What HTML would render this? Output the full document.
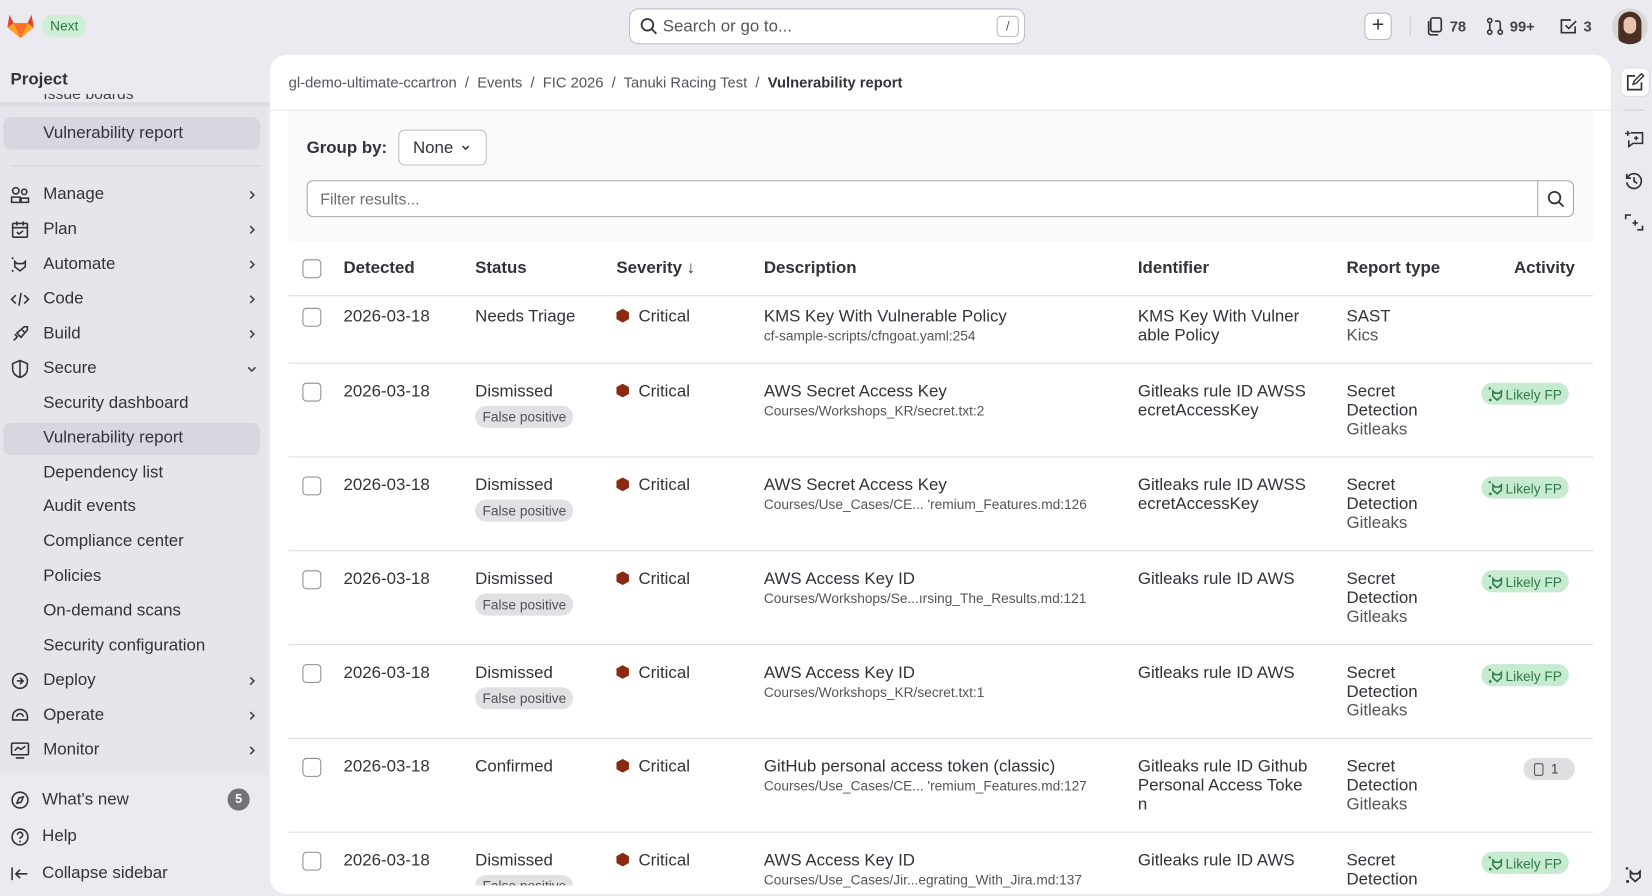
<!DOCTYPE html>
<html><head><meta charset="utf-8">
<style>
*{box-sizing:border-box;margin:0;padding:0}
html,body{width:1652px;height:896px;overflow:hidden;background:#ebeaf0}
#w{position:absolute;left:0;top:0;width:1568px;height:850px;transform:scale(1.05357,1.0541);transform-origin:0 0;font-family:"Liberation Sans",sans-serif;color:#333238;background:#ebeaf0}
.a{position:absolute;white-space:nowrap}
.nav{position:absolute;left:10px;font-size:16px;color:#333238;white-space:nowrap;width:240px;height:20px}
.nav .ic{position:absolute;left:0;top:0;width:18px;height:18px}
.nav .t{position:absolute;left:31px;top:0;white-space:nowrap}
.chev{position:absolute;left:224px;width:10px;height:10px}
.sub{position:absolute;left:41px;font-size:16px;color:#333238;white-space:nowrap}
.cb{position:absolute;width:18px;height:18px;border:1.5px solid #8d8c93;border-radius:4px;background:#fff}
.row{font-size:16px}
.sm{font-size:13px;color:#555}
.hex{display:inline-block;width:12px;height:13px;background:#8a2a11;clip-path:polygon(50% 0,100% 25%,100% 75%,50% 100%,0 75%,0 25%);vertical-align:-1px;margin-right:9px}
.fp{position:absolute;background:#e1e1e4;border-radius:12px;font-size:13px;color:#535158;padding:3px 7px}
.lfp{position:absolute;background:#c6ebd0;border-radius:12px;font-size:13px;color:#2f7a47;padding:3px 7px 3px 6px;left:1406px;height:21px}
.lfp svg{vertical-align:-3px;margin-right:1px}
.line{position:absolute;left:274px;width:1238px;height:1px;background:#dcdcde}
</style></head><body><div id="w">
<svg width="0" height="0" style="position:absolute"><defs>
<symbol id="tan" viewBox="0 0 16 16"><path d="M5 5l2 2h4l2-2v5l-4 3.5L5 10z" fill="none" stroke="currentColor" stroke-width="1.5"/><circle cx="2" cy="2.5" r="1.1" fill="currentColor"/><circle cx="2.5" cy="13.5" r="1.3" fill="currentColor"/></symbol>
<symbol id="chv" viewBox="0 0 10 10"><path d="M3.5 1.5L7 5 3.5 8.5" fill="none" stroke="#444" stroke-width="1.5"/></symbol>
</defs></svg>
<!-- top bar -->
<svg class="a" style="left:6px;top:12px" width="27" height="25" viewBox="0 0 27 25"><path d="M13.5 24 L1 14 L3 2 L7 10 H20 L24 2 L26 14Z" fill="#e24329"/><path d="M13.5 24 L7 10 H20Z" fill="#fc6d26"/><path d="M1 14 L7 10 L13.5 24Z" fill="#fca326"/><path d="M26 14 L20 10 L13.5 24Z" fill="#fca326"/></svg>
<div class="a" style="left:40px;top:14px;width:42px;height:21px;border-radius:11px;background:#cfeed6;color:#2a7a45;font-size:13px;line-height:21px;text-align:center">Next</div>
<div class="a" style="left:597px;top:8px;width:376px;height:34px;border:1px solid #bfbec5;border-radius:9px;background:#fff"></div>
<svg class="a" style="left:607px;top:16px" width="18" height="18" viewBox="0 0 18 18"><circle cx="7.5" cy="7.5" r="5.5" fill="none" stroke="#333" stroke-width="1.7"/><path d="M11.5 11.5L16 16" stroke="#333" stroke-width="1.7"/></svg>
<div class="a" style="left:629px;top:17px;font-size:16px;color:#55545b">Search or go to...</div>
<div class="a" style="left:946px;top:15px;width:21px;height:20px;border:1px solid #bbb;border-radius:4px;font-size:12px;text-align:center;line-height:18px;color:#555">/</div>
<div class="a" style="left:1295px;top:12px;width:26px;height:26px;border:1px solid #bbb;border-radius:6px;background:#fff;text-align:center;font-size:20px;line-height:23px;color:#333">+</div>
<div class="a" style="left:1338px;top:16px;width:1px;height:18px;background:#ccc"></div>
<svg class="a" style="left:1354px;top:16px" width="16" height="18" viewBox="0 0 16 18"><rect x="4" y="1" width="10" height="13" rx="2" fill="none" stroke="#333" stroke-width="1.6"/><path d="M2 4v11a2 2 0 0 0 2 2h7" fill="none" stroke="#333" stroke-width="1.6"/></svg>
<div class="a" style="left:1376px;top:17px;font-size:14px;font-weight:bold;color:#444">78</div>
<svg class="a" style="left:1410px;top:16px" width="18" height="18" viewBox="0 0 18 18"><circle cx="4" cy="3.5" r="2" fill="none" stroke="#333" stroke-width="1.5"/><circle cx="4" cy="14.5" r="2" fill="none" stroke="#333" stroke-width="1.5"/><circle cx="14" cy="14.5" r="2" fill="none" stroke="#333" stroke-width="1.5"/><path d="M4 5.5v7M14 12.5V6a2 2 0 0 0-2-2H9" fill="none" stroke="#333" stroke-width="1.5"/></svg>
<div class="a" style="left:1433px;top:17px;font-size:14px;font-weight:bold;color:#444">99+</div>
<svg class="a" style="left:1480px;top:16px" width="18" height="18" viewBox="0 0 18 18"><path d="M15 9v6H2V3h9" fill="none" stroke="#333" stroke-width="1.6"/><path d="M6 8l3 3 7-7" fill="none" stroke="#333" stroke-width="1.6"/></svg>
<div class="a" style="left:1503px;top:17px;font-size:14px;font-weight:bold;color:#444">3</div>
<div class="a" style="left:1530px;top:8px;width:34px;height:34px;border-radius:50%;overflow:hidden;background:#d9d6d3"><div style="position:absolute;left:6px;top:3px;width:22px;height:34px;border-radius:11px;background:#4a3024"></div><div style="position:absolute;left:11px;top:8px;width:12px;height:16px;border-radius:6px;background:#e7c3ad"></div></div>
<!-- sidebar -->
<div class="a" style="left:10px;top:67px;font-size:16px;font-weight:bold">Project</div>
<div class="a" style="left:0;top:97px;width:256px;height:638px;background:#e6e5ec"></div>
<div class="a" style="left:0;top:97px;width:256px;height:6px;background:linear-gradient(#d8d7de,transparent)"></div>
<div class="a" style="left:41px;top:89px;height:12px;overflow:hidden;font-size:15px;color:#444;width:120px"><div style="margin-top:-8px">Issue boards</div></div>
<div class="a" style="left:3px;top:111px;width:244px;height:31px;border-radius:8px;background:#d8d7df"></div>
<div class="sub" style="top:118px">Vulnerability report</div>
<div class="a" style="left:10px;top:157px;width:237px;height:1px;background:#d5d4da"></div>
<div class="nav" style="top:176px"><svg class="ic" viewBox="0 0 18 18"><circle cx="5" cy="5" r="3" fill="none" stroke="#333" stroke-width="1.5"/><circle cx="13" cy="6" r="2.5" fill="none" stroke="#333" stroke-width="1.5"/><path d="M1 16v-5h8v5zM10 16v-4h7v4z" fill="none" stroke="#333" stroke-width="1.5"/></svg><span class="t">Manage</span><svg class="chev" style="top:4px"><use href="#chv"/></svg></div>
<div class="nav" style="top:209px"><svg class="ic" viewBox="0 0 18 18"><rect x="2" y="3" width="14" height="13" rx="1" fill="none" stroke="#333" stroke-width="1.5"/><path d="M2 7h14M6 1v4M12 1v4M6 11l2 2 4-3" fill="none" stroke="#333" stroke-width="1.5"/></svg><span class="t">Plan</span><svg class="chev" style="top:4px"><use href="#chv"/></svg></div>
<div class="nav" style="top:242px"><svg class="ic" viewBox="0 0 18 18"><path d="M4 6l2 2h6l2-2v5l-5 4-5-4z" fill="none" stroke="#333" stroke-width="1.5"/><circle cx="2" cy="3" r="1" fill="#333"/><circle cx="2" cy="15" r="1" fill="#333"/></svg><span class="t">Automate</span><svg class="chev" style="top:4px"><use href="#chv"/></svg></div>
<div class="nav" style="top:275px"><svg class="ic" viewBox="0 0 18 18"><path d="M5 5L1 9l4 4M13 5l4 4-4 4M10 3L8 15" fill="none" stroke="#333" stroke-width="1.5"/></svg><span class="t">Code</span><svg class="chev" style="top:4px"><use href="#chv"/></svg></div>
<div class="nav" style="top:308px"><svg class="ic" viewBox="0 0 18 18"><path d="M3 15l3-3M6 8l4 4 6-7V2h-3L6 8zM4 9l3 3M11 5l2 2" fill="none" stroke="#333" stroke-width="1.5"/></svg><span class="t">Build</span><svg class="chev" style="top:4px"><use href="#chv"/></svg></div>
<div class="nav" style="top:341px"><svg class="ic" viewBox="0 0 18 18"><path d="M9 1l7 3v5c0 4-3 7-7 8-4-1-7-4-7-8V4z M9 2v14" fill="none" stroke="#333" stroke-width="1.5"/></svg><span class="t">Secure</span><svg class="chev" style="top:4px;transform:rotate(90deg)"><use href="#chv"/></svg></div>
<div class="sub" style="top:374px">Security dashboard</div>
<div class="a" style="left:3px;top:401px;width:244px;height:31px;border-radius:8px;background:#d8d7df"></div>
<div class="sub" style="top:407px">Vulnerability report</div>
<div class="sub" style="top:440px">Dependency list</div>
<div class="sub" style="top:472px">Audit events</div>
<div class="sub" style="top:505px">Compliance center</div>
<div class="sub" style="top:538px">Policies</div>
<div class="sub" style="top:571px">On-demand scans</div>
<div class="sub" style="top:604px">Security configuration</div>
<div class="nav" style="top:637px"><svg class="ic" viewBox="0 0 18 18"><circle cx="9" cy="9" r="7" fill="none" stroke="#333" stroke-width="1.5"/><path d="M6 9h6M9 6l3 3-3 3" fill="none" stroke="#333" stroke-width="1.5"/></svg><span class="t">Deploy</span><svg class="chev" style="top:4px"><use href="#chv"/></svg></div>
<div class="nav" style="top:670px"><svg class="ic" viewBox="0 0 18 18"><path d="M2 10a7 7 0 0 1 14 0v3H2z M6 10a3 3 0 0 1 6 0" fill="none" stroke="#333" stroke-width="1.5"/></svg><span class="t">Operate</span><svg class="chev" style="top:4px"><use href="#chv"/></svg></div>
<div class="nav" style="top:703px"><svg class="ic" viewBox="0 0 18 18"><rect x="1" y="2" width="16" height="11" rx="1" fill="none" stroke="#333" stroke-width="1.5"/><path d="M5 16h8M4 9l3-3 3 2 4-3" fill="none" stroke="#333" stroke-width="1.5"/></svg><span class="t">Monitor</span><svg class="chev" style="top:4px"><use href="#chv"/></svg></div>
<div class="nav" style="top:750px"><svg class="ic" viewBox="0 0 18 18"><circle cx="9" cy="9" r="7.5" fill="none" stroke="#333" stroke-width="1.5"/><path d="M12 6l-2 5-4 1 2-5z" fill="none" stroke="#333" stroke-width="1.5"/></svg><span class="t" style="left:30px">What's new</span></div>
<div class="a" style="left:216px;top:748px;width:21px;height:21px;border-radius:50%;background:#737278;color:#fff;font-size:12px;font-weight:bold;text-align:center;line-height:21px">5</div>
<div class="nav" style="top:785px"><svg class="ic" viewBox="0 0 18 18"><circle cx="9" cy="9" r="7.5" fill="none" stroke="#333" stroke-width="1.5"/><path d="M6.5 7a2.5 2.5 0 1 1 3.5 2.3c-.7.3-1 .8-1 1.5" fill="none" stroke="#333" stroke-width="1.5"/><circle cx="9" cy="13.3" r=".9" fill="#333"/></svg><span class="t" style="left:30px">Help</span></div>
<div class="nav" style="top:820px"><svg class="ic" viewBox="0 0 18 18"><path d="M1.5 3v12M16 9H5M9 5L5 9l4 4" fill="none" stroke="#333" stroke-width="1.5"/></svg><span class="t" style="left:30px">Collapse sidebar</span></div>
<!-- right rail -->
<div class="a" style="left:1538px;top:64px;width:28px;height:28px;border-radius:7px;background:#fff;border:1px solid #ddd"></div>
<svg class="a" style="left:1543px;top:69px" width="18" height="18" viewBox="0 0 18 18"><path d="M15 9v7H2V3h7" fill="none" stroke="#333" stroke-width="1.6"/><path d="M7 11l1-3 7-7 2 2-7 7z" fill="none" stroke="#333" stroke-width="1.4"/></svg>
<div class="a" style="left:1541px;top:104px;width:20px;height:1px;background:#ccc"></div>
<svg class="a" style="left:1542px;top:123px" width="18" height="18" viewBox="0 0 18 18"><path d="M6 3h11v10H8l-4 3v-6" fill="none" stroke="#333" stroke-width="1.5"/><path d="M3 1v5M0.5 3.5h5M11 6v4M9 8h4" stroke="#333" stroke-width="1.4"/></svg>
<svg class="a" style="left:1542px;top:163px" width="18" height="18" viewBox="0 0 18 18"><path d="M3 5a7 7 0 1 1-1 5" fill="none" stroke="#333" stroke-width="1.6"/><path d="M2 2v4h4M9 5v4l3 2" fill="none" stroke="#333" stroke-width="1.6"/></svg>
<svg class="a" style="left:1542px;top:202px" width="18" height="18" viewBox="0 0 18 18"><path d="M1 6V2h5M17 12v4h-5M10 7v5M7.5 9.5h5" fill="none" stroke="#333" stroke-width="1.6"/></svg>
<svg class="a" style="left:1542px;top:821px;color:#333" width="18" height="18"><use href="#tan"/></svg>
<!-- main panel -->
<div class="a" style="left:256px;top:52px;width:1273px;height:796px;background:#fff;border-radius:16px"></div>
<div class="a" style="left:274px;top:70px;font-size:14px;color:#55545b">gl-demo-ultimate-ccartron &nbsp;/&nbsp; Events &nbsp;/&nbsp; FIC 2026 &nbsp;/&nbsp; Tanuki Racing Test &nbsp;/&nbsp; <b style="color:#333238">Vulnerability report</b></div>
<div class="a" style="left:256px;top:104px;width:1273px;height:1px;background:#e4e4e8"></div>
<div class="a" style="left:274px;top:105px;width:1238px;height:124px;background:#fafafb"></div>
<div class="a" style="left:291px;top:132px;font-size:16px;font-weight:bold">Group by:</div>
<div class="a" style="left:378px;top:123px;width:84px;height:34px;border:1px solid #bfbfc3;border-radius:6px;background:#fff;font-size:16px;padding:8px 0 0 13px">None <svg width="10" height="10" style="margin-left:2px"><path d="M2 3.5L5 6.5 8 3.5" fill="none" stroke="#333" stroke-width="1.4"/></svg></div>
<div class="a" style="left:291px;top:171px;width:1203px;height:35px;border:1px solid #a9a8ae;border-radius:6px;background:#fff"></div>
<div class="a" style="left:1459px;top:172px;width:1px;height:33px;background:#a9a8ae"></div>
<svg class="a" style="left:1468px;top:180px" width="18" height="18" viewBox="0 0 18 18"><circle cx="7.5" cy="7.5" r="5.5" fill="none" stroke="#333" stroke-width="1.7"/><path d="M11.5 11.5L16 16" stroke="#333" stroke-width="1.7"/></svg>
<div class="a" style="left:304px;top:181px;font-size:15px;color:#6e6d73">Filter results...</div>
<!-- header -->
<div class="cb" style="left:287px;top:246px"></div>
<div class="a" style="left:326px;top:246px;font-size:16px;font-weight:bold">Detected</div>
<div class="a" style="left:451px;top:246px;font-size:16px;font-weight:bold">Status</div>
<div class="a" style="left:585px;top:246px;font-size:16px;font-weight:bold">Severity ↓</div>
<div class="a" style="left:725px;top:246px;font-size:16px;font-weight:bold">Description</div>
<div class="a" style="left:1080px;top:246px;font-size:16px;font-weight:bold">Identifier</div>
<div class="a" style="left:1278px;top:246px;font-size:16px;font-weight:bold">Report type</div>
<div class="a" style="left:1437px;top:246px;font-size:16px;font-weight:bold">Activity</div>
<div class="line" style="top:280px"></div>
<!-- rows -->
<div class="line" style="top:344px"></div><div class="line" style="top:433px"></div><div class="line" style="top:522px"></div><div class="line" style="top:611px"></div><div class="line" style="top:700px"></div><div class="line" style="top:789px"></div>

<div class="cb" style="left:287px;top:292px"></div>
<div class="a row" style="left:326px;top:292px">2026-03-18</div>
<div class="a row" style="left:451px;top:292px">Needs Triage</div>
<div class="a row" style="left:585px;top:292px"><span class="hex"></span>Critical</div>
<div class="a row" style="left:725px;top:292px;line-height:18px">KMS Key With Vulnerable Policy<br><span class="sm">cf-sample-scripts/cfngoat.yaml:254</span></div>
<div class="a row" style="left:1080px;top:292px;line-height:18px">KMS Key With Vulner<br>able Policy</div>
<div class="a row" style="left:1278px;top:292px;line-height:18px">SAST<br><span style="color:#555">Kics</span></div>

<div class="cb" style="left:287px;top:363px"></div>
<div class="a row" style="left:326px;top:363px">2026-03-18</div>
<div class="a row" style="left:451px;top:363px">Dismissed</div>
<div class="fp" style="left:451px;top:385px">False positive</div>
<div class="a row" style="left:585px;top:363px"><span class="hex"></span>Critical</div>
<div class="a row" style="left:725px;top:363px;line-height:18px">AWS Secret Access Key<br><span class="sm">Courses/Workshops_KR/secret.txt:2</span></div>
<div class="a row" style="left:1080px;top:363px;line-height:18px">Gitleaks rule ID AWSS<br>ecretAccessKey</div>
<div class="a row" style="left:1278px;top:363px;line-height:18px">Secret<br>Detection<br><span style="color:#555">Gitleaks</span></div>
<div class="lfp" style="top:363px"><svg width="16" height="16"><use href="#tan"/></svg>Likely FP</div>

<div class="cb" style="left:287px;top:452px"></div>
<div class="a row" style="left:326px;top:452px">2026-03-18</div>
<div class="a row" style="left:451px;top:452px">Dismissed</div>
<div class="fp" style="left:451px;top:474px">False positive</div>
<div class="a row" style="left:585px;top:452px"><span class="hex"></span>Critical</div>
<div class="a row" style="left:725px;top:452px;line-height:18px">AWS Secret Access Key<br><span class="sm">Courses/Use_Cases/CE... 'remium_Features.md:126</span></div>
<div class="a row" style="left:1080px;top:452px;line-height:18px">Gitleaks rule ID AWSS<br>ecretAccessKey</div>
<div class="a row" style="left:1278px;top:452px;line-height:18px">Secret<br>Detection<br><span style="color:#555">Gitleaks</span></div>
<div class="lfp" style="top:452px"><svg width="16" height="16"><use href="#tan"/></svg>Likely FP</div>

<div class="cb" style="left:287px;top:541px"></div>
<div class="a row" style="left:326px;top:541px">2026-03-18</div>
<div class="a row" style="left:451px;top:541px">Dismissed</div>
<div class="fp" style="left:451px;top:563px">False positive</div>
<div class="a row" style="left:585px;top:541px"><span class="hex"></span>Critical</div>
<div class="a row" style="left:725px;top:541px;line-height:18px">AWS Access Key ID<br><span class="sm">Courses/Workshops/Se...ırsing_The_Results.md:121</span></div>
<div class="a row" style="left:1080px;top:541px;line-height:18px">Gitleaks rule ID AWS</div>
<div class="a row" style="left:1278px;top:541px;line-height:18px">Secret<br>Detection<br><span style="color:#555">Gitleaks</span></div>
<div class="lfp" style="top:541px"><svg width="16" height="16"><use href="#tan"/></svg>Likely FP</div>

<div class="cb" style="left:287px;top:630px"></div>
<div class="a row" style="left:326px;top:630px">2026-03-18</div>
<div class="a row" style="left:451px;top:630px">Dismissed</div>
<div class="fp" style="left:451px;top:652px">False positive</div>
<div class="a row" style="left:585px;top:630px"><span class="hex"></span>Critical</div>
<div class="a row" style="left:725px;top:630px;line-height:18px">AWS Access Key ID<br><span class="sm">Courses/Workshops_KR/secret.txt:1</span></div>
<div class="a row" style="left:1080px;top:630px;line-height:18px">Gitleaks rule ID AWS</div>
<div class="a row" style="left:1278px;top:630px;line-height:18px">Secret<br>Detection<br><span style="color:#555">Gitleaks</span></div>
<div class="lfp" style="top:630px"><svg width="16" height="16"><use href="#tan"/></svg>Likely FP</div>

<div class="cb" style="left:287px;top:719px"></div>
<div class="a row" style="left:326px;top:719px">2026-03-18</div>
<div class="a row" style="left:451px;top:719px">Confirmed</div>
<div class="a row" style="left:585px;top:719px"><span class="hex"></span>Critical</div>
<div class="a row" style="left:725px;top:719px;line-height:18px">GitHub personal access token (classic)<br><span class="sm">Courses/Use_Cases/CE... 'remium_Features.md:127</span></div>
<div class="a row" style="left:1080px;top:719px;line-height:18px">Gitleaks rule ID Github<br>Personal Access Toke<br>n</div>
<div class="a row" style="left:1278px;top:719px;line-height:18px">Secret<br>Detection<br><span style="color:#555">Gitleaks</span></div>
<div class="a" style="left:1446px;top:719px;width:49px;height:21px;border-radius:11px;background:#dfdfe2;font-size:13px;color:#444;padding:3px 0 0 10px"><span style="display:inline-block;width:9px;height:12px;border:1.5px solid #555;border-radius:2px;vertical-align:-2px;margin-right:7px"></span>1</div>

<div class="cb" style="left:287px;top:808px"></div>
<div class="a row" style="left:326px;top:808px">2026-03-18</div>
<div class="a row" style="left:451px;top:808px">Dismissed</div>
<div class="a" style="left:451px;top:830px;width:99px;height:10px;overflow:hidden"><div class="fp" style="left:0;top:0">False positive</div></div>
<div class="a row" style="left:585px;top:808px"><span class="hex"></span>Critical</div>
<div class="a row" style="left:725px;top:808px;line-height:18px">AWS Access Key ID<br><span class="sm">Courses/Use_Cases/Jir...egrating_With_Jira.md:137</span></div>
<div class="a row" style="left:1080px;top:808px;line-height:18px">Gitleaks rule ID AWS</div>
<div class="a row" style="left:1278px;top:808px;line-height:18px">Secret<br>Detection</div>
<div class="lfp" style="top:808px"><svg width="16" height="16"><use href="#tan"/></svg>Likely FP</div>
</div></body></html>
